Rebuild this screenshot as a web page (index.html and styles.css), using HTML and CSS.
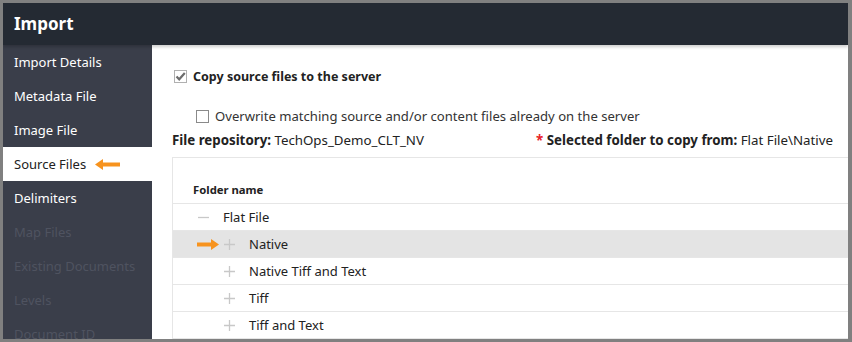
FILE: index.html
```html
<!DOCTYPE html>
<html>
<head>
  <title>Import</title>
<link rel="stylesheet" href="styles.css"></head>
<body>

  <div class="frame">
    <div class="header">Import</div>
    <div class="main">
      <div class="sidebar">
        <div class="nav-item">Import Details</div>
        <div class="nav-item">Metadata File</div>
        <div class="nav-item">Image File</div>
        <div class="nav-item active">Source Files
          <svg class="arrow" width="25" height="11" viewBox="0 0 25 11"><path d="M0 5.5 L8 0 L8 3.5 L25 3.5 L25 7.5 L8 7.5 L8 11 Z" fill="#f7931e"/></svg>
        </div>
        <div class="nav-item">Delimiters</div>
        <div class="nav-item disabled">Map Files</div>
        <div class="nav-item disabled">Existing Documents</div>
        <div class="nav-item disabled">Levels</div>
        <div class="nav-item disabled">Document ID</div>
      </div>

      <div class="content">
        <div class="option">
          <span class="checkbox checked">
            <svg width="11" height="11" viewBox="0 0 11 11"><path d="M1.5 5.5 L4.2 8.3 L9.8 2" fill="none" stroke="#6d6d6d" stroke-width="2.2"/></svg>
          </span>
          <b>Copy source files to the server</b>
        </div>
        <div class="option sub">
          <span class="checkbox"></span>
          Overwrite matching source and/or content files already on the server
        </div>
        <div class="info">
          <div><b>File repository:</b> TechOps_Demo_CLT_NV</div>
          <div><span class="req">*</span> <b>Selected folder to copy from:</b> Flat File\Native</div>
        </div>

        <div class="tree">
          <div class="tree-head">Folder name</div>
          <div class="row">
            <svg class="toggle" width="11" height="11" viewBox="0 0 11 11"><path d="M0 5.5 H11" stroke="#c8c8c8" stroke-width="1.3"/></svg>
            Flat File
          </div>
          <div class="row child selected">
            <svg class="row-arrow" width="22" height="11" viewBox="0 0 22 11"><path d="M22 5.5 L14 0 L14 3.5 L0 3.5 L0 7.5 L14 7.5 L14 11 Z" fill="#f7931e"/></svg>
            <svg class="toggle" width="11" height="11" viewBox="0 0 11 11"><path d="M0 5.5 H11 M5.5 0 V11" stroke="#c8c8c8" stroke-width="1.3"/></svg>
            Native
          </div>
          <div class="row child">
            <svg class="toggle" width="11" height="11" viewBox="0 0 11 11"><path d="M0 5.5 H11 M5.5 0 V11" stroke="#c8c8c8" stroke-width="1.3"/></svg>
            Native Tiff and Text
          </div>
          <div class="row child">
            <svg class="toggle" width="11" height="11" viewBox="0 0 11 11"><path d="M0 5.5 H11 M5.5 0 V11" stroke="#c8c8c8" stroke-width="1.3"/></svg>
            Tiff
          </div>
          <div class="row child">
            <svg class="toggle" width="11" height="11" viewBox="0 0 11 11"><path d="M0 5.5 H11 M5.5 0 V11" stroke="#c8c8c8" stroke-width="1.3"/></svg>
            Tiff and Text
          </div>
        </div>
      </div>
    </div>
  </div>

</body>
</html>
```

FILE: styles.css
```css
body {
  margin: 0;
  font-family: "Noto Sans", "Open Sans", sans-serif;
  font-size: 12px;
  color: #222;
}

.frame {
  width: 852px;
  height: 342px;
  box-sizing: border-box;
  border: 3px solid #808080;
  border-right-width: 4px;
  overflow: hidden;
  display: flex;
  flex-direction: column;
}

.header {
  height: 42px;
  flex-shrink: 0;
  background-color: #242a33;
  color: #fff;
  font-weight: bold;
  font-size: 17px;
  line-height: 42px;
  padding-left: 11px;
  box-shadow: 0 2px 3px rgba(0, 0, 0, 0.2);
  position: relative;
  z-index: 1;
}

.main {
  flex: 1;
  display: flex;
  min-height: 0;
}

.sidebar {
  width: 149px;
  flex-shrink: 0;
  background-color: #3a3e4a;
}

.nav-item {
  height: 34px;
  line-height: 34px;
  padding-left: 11px;
  color: #fff;
  font-size: 13px;
  white-space: nowrap;
  display: flex;
  align-items: center;
}

.nav-item.active {
  background-color: #fff;
  color: #222;
}

.nav-item.disabled {
  color: #4f5360;
}

.arrow {
  margin-left: 9px;
}

.content {
  flex: 1;
  background-color: #fff;
  padding: 23px 0 0 20px;
}

.option {
  display: flex;
  align-items: center;
  height: 16px;
  font-size: 12.5px;
}

.option b {
  font-weight: bold;
}

.option.sub {
  margin-top: 24px;
  margin-left: 24px;
  color: #333;
  font-size: 13.1px;
}

.checkbox {
  width: 11px;
  height: 11px;
  border: 1px solid #8a8a8a;
  background-color: #fff;
  margin-right: 6px;
  display: inline-flex;
  align-items: center;
  justify-content: center;
  flex-shrink: 0;
}

.checkbox.checked {
  border-color: #b0b0b0;
  margin-left: 2px;
}

.info {
  display: flex;
  justify-content: space-between;
  padding-right: 15px;
  margin-top: 8px;
  font-size: 13.3px;
  height: 16px;
  line-height: 16px;
}

.req {
  color: #e8232a;
  font-weight: bold;
}

.tree {
  margin-top: 9px;
  border-left: 1px solid #e6e6e6;
  border-top: 1px solid #e6e6e6;
}

.tree-head {
  height: 46px;
  box-sizing: border-box;
  padding: 24px 0 0 20px;
  font-weight: bold;
  font-size: 11.3px;
  border-bottom: 1px solid #e6e6e6;
}

.row {
  height: 27px;
  box-sizing: border-box;
  border-bottom: 1px solid #e6e6e6;
  display: flex;
  align-items: center;
  padding-left: 25px;
  font-size: 13px;
  position: relative;
}

.row.child {
  padding-left: 51px;
}

.row.selected {
  background-color: #e4e4e4;
}

.toggle {
  margin-right: 14px;
  flex-shrink: 0;
}

.row-arrow {
  position: absolute;
  left: 24px;
  top: 8px;
}
```
